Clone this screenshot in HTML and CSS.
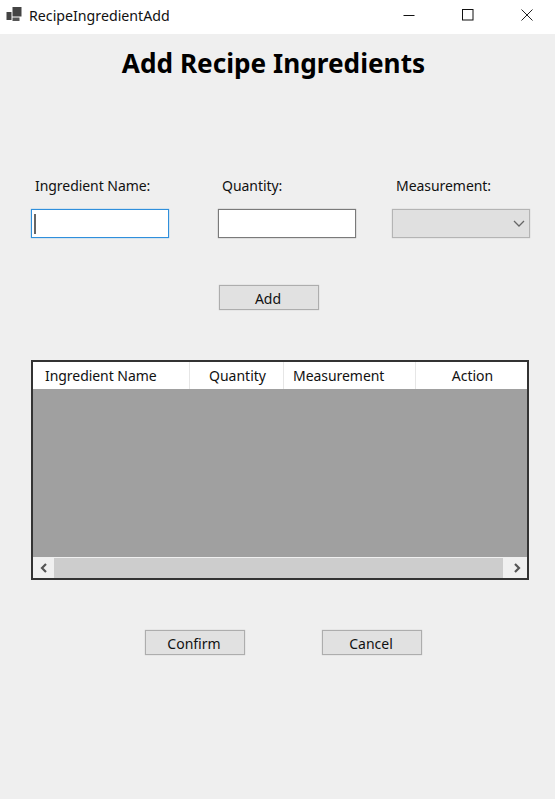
FILE: index.html
```html
<!DOCTYPE html>
<html lang="en">
<head>
  <meta charset="UTF-8" />
  <title>RecipeIngredientAdd</title>
  <link rel="stylesheet" href="styles.css">
</head>

<body>
  <div class="titlebar">
    <svg class="app-icon" width="16" height="16" viewBox="0 0 16 16">
      <rect x="0.5" y="5" width="5" height="8" fill="#444" />
      <rect x="6.5" y="0" width="9" height="9.5" fill="#444" />
      <rect x="6.5" y="10.5" width="7" height="3.5" fill="#555" />
    </svg>
    <span class="window-name">RecipeIngredientAdd</span>
    <div class="window-buttons">
      <svg width="12" height="12" viewBox="0 0 12 12"><path d="M0.5 6.5H11.5" stroke="#111" fill="none" /></svg>
      <svg width="12" height="12" viewBox="0 0 12 12"><rect x="0.5" y="0.5" width="10.5" height="10.5" stroke="#111" fill="none" /></svg>
      <svg width="12" height="12" viewBox="0 0 12 12"><path d="M0.5 0.5L11.5 11.5M11.5 0.5L0.5 11.5" stroke="#222" fill="none" /></svg>
    </div>
  </div>

  <div class="content">
    <h1 class="title">Add Recipe Ingredients</h1>

    <div class="fields">
      <div class="field">
        <label class="label">Ingredient Name:</label>
        <div class="textbox focused"><span class="caret"></span></div>
      </div>
      <div class="field">
        <label class="label">Quantity:</label>
        <div class="textbox"></div>
      </div>
      <div class="field">
        <label class="label">Measurement:</label>
        <div class="combo">
          <svg width="12" height="7" viewBox="0 0 12 7"><path d="M1 1L6 6L11 1" stroke="#666" stroke-width="1.3" fill="none" /></svg>
        </div>
      </div>
    </div>

    <div class="add-row">
      <div class="btn">Add</div>
    </div>

    <div class="grid">
      <div class="grid-header">
        <div class="col col-name">Ingredient Name</div>
        <div class="col col-qty">Quantity</div>
        <div class="col col-measure">Measurement</div>
        <div class="col col-action">Action</div>
      </div>
      <div class="grid-body"></div>
      <div class="scrollbar">
        <div class="arrow">
          <svg width="10" height="10" viewBox="0 0 10 10"><path d="M7 1L3 5L7 9" stroke="#555" stroke-width="2.2" fill="none" /></svg>
        </div>
        <div class="thumb"></div>
        <div class="arrow arrow-right">
          <svg width="10" height="10" viewBox="0 0 10 10"><path d="M3 1L7 5L3 9" stroke="#555" stroke-width="2.2" fill="none" /></svg>
        </div>
      </div>
    </div>

    <div class="bottom-row">
      <div class="btn">Confirm</div>
      <div class="btn">Cancel</div>
    </div>
  </div>
</body>
</html>
```
FILE: styles.css
```css
html, body {
  margin: 0;
  padding: 0;
  height: 100%;
  overflow: hidden;
  background-color: #efefef;
  color: #111;
  font-family: "Noto Sans", Arial, sans-serif;
  font-size: 14px;
}

.titlebar {
  height: 34px;
  background-color: white;
  display: flex;
  align-items: center;
  padding-left: 6px;
}

.app-icon {
  margin-right: 7px;
  margin-top: -5px;
}

.window-name {
  font-size: 14.2px;
  margin-top: -3px;
}

.window-buttons {
  margin-left: auto;
  display: flex;
  gap: 47px;
  padding-right: 22px;
  margin-top: -4px;
}

.content {
  padding: 0 26px 0 31px;
}

.title {
  margin: 12px 0 0 0;
  width: 485px;
  text-align: center;
  font-size: 26.2px;
  line-height: 34px;
  font-weight: 700;
  color: #000;
}

.fields {
  display: flex;
  margin-top: 96px;
}

.field {
  display: flex;
  flex-direction: column;
}

.field + .field {
  margin-left: 49px;
}

.field:last-child {
  margin-left: 36px;
}

.label {
  height: 20px;
  line-height: 20px;
  margin-bottom: 13px;
  padding-left: 4px;
  letter-spacing: -0.05px;
}

.textbox {
  box-sizing: border-box;
  width: 138px;
  height: 29px;
  background-color: white;
  border: 1px solid #7a7a7a;
  box-shadow: 0 0 1px #8a8a8a;
  display: flex;
  align-items: center;
  padding-left: 2px;
}

.textbox.focused {
  border-color: #2f8fdc;
  box-shadow: 0 0 1px #5aa9e6;
}

.caret {
  width: 2px;
  height: 20px;
  background-color: #666;
}

.combo {
  box-sizing: border-box;
  width: 138px;
  height: 29px;
  background-color: #e0e0e0;
  border: 1px solid #b4b4b4;
  box-shadow: 0 0 1px #bbb;
  display: flex;
  align-items: center;
  justify-content: flex-end;
  padding-right: 4px;
}

.add-row {
  margin-top: 47px;
  padding-left: 188px;
}

.btn {
  box-sizing: border-box;
  width: 100px;
  height: 25px;
  line-height: 25px;
  padding-right: 2px;
  text-align: center;
  background-color: #e1e1e1;
  border: 1px solid #adadad;
  box-shadow: 0 0 1px #bbb;
}

.grid {
  box-sizing: border-box;
  width: 498px;
  height: 220px;
  margin-top: 50px;
  border: 2px solid #333;
  display: flex;
  flex-direction: column;
}

.grid-header {
  height: 27px;
  display: flex;
  background-color: white;
}

.col {
  box-sizing: border-box;
  line-height: 28px;
  text-align: center;
  border-right: 1px solid #e6e6e6;
}

.col-name {
  width: 157px;
  padding-left: 12px;
  text-align: left;
  letter-spacing: -0.05px;
}

.col-qty {
  width: 94px;
  padding-left: 2px;
}

.col-measure {
  width: 132px;
  padding-left: 9px;
  text-align: left;
  letter-spacing: -0.05px;
}

.col-action {
  flex: 1;
  border-right: none;
  padding-left: 2px;
}

.grid-body {
  flex: 1;
  background-color: #a0a0a0;
  border-bottom: 1px solid #f0f0f0;
}

.scrollbar {
  height: 20px;
  display: flex;
  background-color: #f0f0f0;
}

.arrow {
  width: 21px;
  display: flex;
  align-items: center;
  justify-content: center;
}

.arrow-right {
  width: 24px;
  padding-left: 3px;
  box-sizing: border-box;
}

.thumb {
  flex: 1;
  background-color: #cdcdcd;
}

.bottom-row {
  display: flex;
  gap: 77px;
  margin-top: 50px;
  padding-left: 114px;
}
```
